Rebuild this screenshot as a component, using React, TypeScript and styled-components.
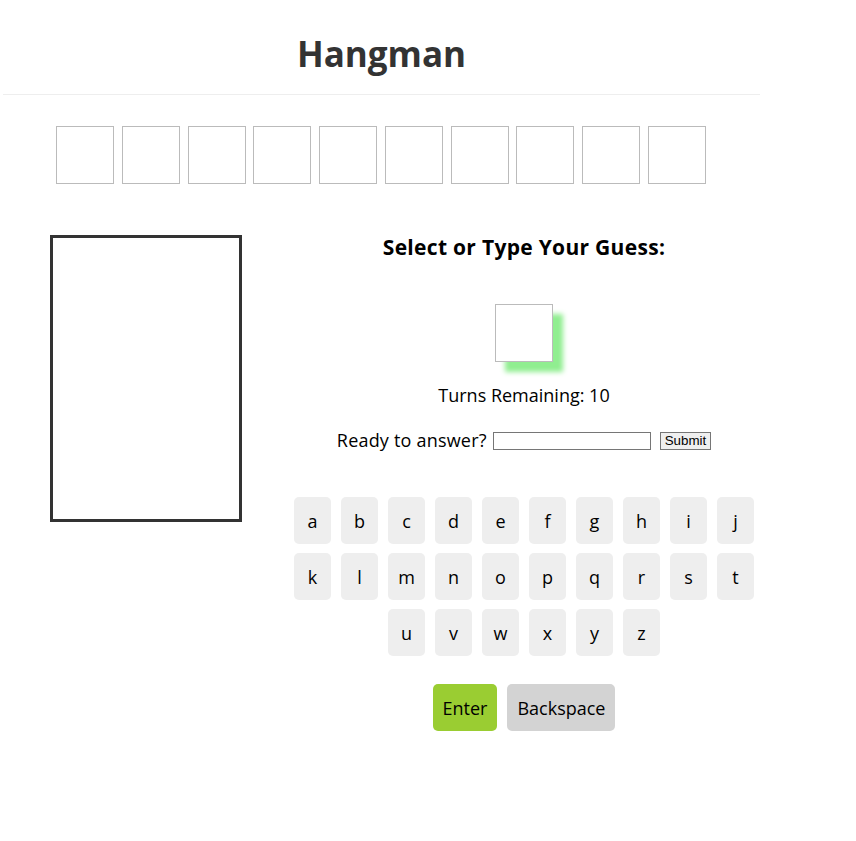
import React from "react";
import styled, { createGlobalStyle } from "styled-components";

const Global = createGlobalStyle`
  html, body { margin: 0; padding: 0; background: #fff; }
  body { font-family: "Open Sans", "DejaVu Sans", sans-serif; color: #000; }
`;

const Page = styled.div`
  width: 762px;
`;

const Header = styled.header`
  margin: 0 2px 0 3px;
  height: 94px;
  border-bottom: 1px solid #eee;
  display: flex;
  align-items: center;
  justify-content: center;
`;

const Title = styled.h1`
  margin: 0;
  font-size: 35px;
  font-weight: 700;
  color: #333;
  transform: translateY(6px);
`;

const WordRow = styled.div`
  display: flex;
  justify-content: center;
  gap: 7.8px;
  margin-top: 31px;
`;

const LetterBox = styled.div`
  width: 58px;
  height: 58px;
  box-sizing: border-box;
  border: 1px solid #bbb;
`;

const Main = styled.div`
  display: flex;
  margin-top: 51px;
  padding-left: 50px;
`;

const Gallows = styled.div`
  width: 192px;
  height: 287px;
  box-sizing: border-box;
  border: 3px solid #333;
  flex-shrink: 0;
`;

const Panel = styled.div`
  width: 478px;
  margin-left: 44px;
  display: flex;
  flex-direction: column;
  align-items: center;
`;

const Prompt = styled.h2`
  margin: 0;
  font-size: 21px;
  font-weight: 700;
  line-height: 24px;
  letter-spacing: 0.3px;
`;

const GuessBox = styled.div`
  width: 58px;
  height: 58px;
  box-sizing: border-box;
  border: 1px solid #bbb;
  background: #fff;
  box-shadow: 10px 10px 5px #90ee90;
  margin-top: 45px;
`;

const Turns = styled.p`
  margin: 22px 0 0;
  font-size: 18px;
  line-height: 22px;
`;

const AnswerRow = styled.form`
  margin-top: 23px;
  display: flex;
  align-items: flex-end;
  font-size: 18px;
  line-height: 22px;
`;

const AnswerLabel = styled.label`
  margin-right: 6px;
  letter-spacing: 0.2px;
`;

const AnswerInput = styled.input`
  width: 158px;
  height: 18px;
  box-sizing: border-box;
  border: 1px solid #767676;
  padding: 1px 2px;
  margin: 0 0 1px;
  font-size: 13px;
`;

const SubmitButton = styled.button`
  margin: 0 0 1px 9px;
  height: 18px;
  box-sizing: border-box;
  padding: 0 4px;
  font-family: "Liberation Sans", Arial, sans-serif;
  font-size: 13.33px;
  line-height: 14px;
  background: #efefef;
  border: 1px solid #767676;
  border-radius: 0;
  color: #000;
`;

const Keyboard = styled.div`
  margin-top: 46px;
  width: 464px;
  display: flex;
  flex-wrap: wrap;
  justify-content: center;
  column-gap: 10px;
  row-gap: 9px;
`;

const Key = styled.button`
  width: 37px;
  height: 47px;
  border: none;
  border-radius: 5px;
  background: #eee;
  color: #000;
  font-family: inherit;
  font-size: 18px;
  padding: 0;
`;

const Actions = styled.div`
  margin-top: 28px;
  display: flex;
  gap: 10px;
`;

const ActionButton = styled.button<{ $variant: "enter" | "back" }>`
  height: 47px;
  padding: 0 10px;
  border: none;
  border-radius: 5px;
  font-family: inherit;
  font-size: 18px;
  color: #000;
  background: ${(p) => (p.$variant === "enter" ? "#9acd32" : "#d3d3d3")};
`;

const letters = "abcdefghijklmnopqrstuvwxyz".split("");

export default function App() {
  return (
    <>
      <Global />
      <Page>
        <Header>
          <Title>Hangman</Title>
        </Header>
        <WordRow>
          {Array.from({ length: 10 }).map((_, i) => (
            <LetterBox key={i} />
          ))}
        </WordRow>
        <Main>
          <Gallows />
          <Panel>
            <Prompt>Select or Type Your Guess:</Prompt>
            <GuessBox />
            <Turns>Turns Remaining: 10</Turns>
            <AnswerRow onSubmit={(e) => e.preventDefault()}>
              <AnswerLabel>Ready to answer?</AnswerLabel>
              <AnswerInput type="text" />
              <SubmitButton type="submit">Submit</SubmitButton>
            </AnswerRow>
            <Keyboard>
              {letters.map((l) => (
                <Key key={l}>{l}</Key>
              ))}
            </Keyboard>
            <Actions>
              <ActionButton $variant="enter">Enter</ActionButton>
              <ActionButton $variant="back">Backspace</ActionButton>
            </Actions>
          </Panel>
        </Main>
      </Page>
    </>
  );
}
